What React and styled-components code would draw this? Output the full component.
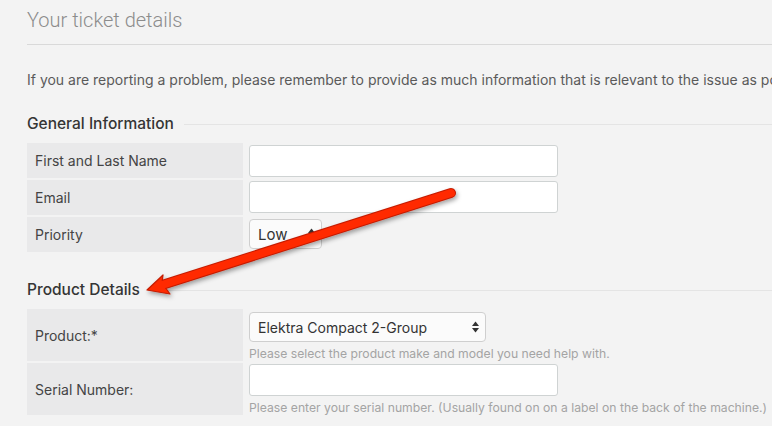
import React from "react";
import styled, { createGlobalStyle } from "styled-components";

const GlobalStyle = createGlobalStyle`
  html, body {
    margin: 0;
    padding: 0;
    background: #f3f3f3;
  }
  body {
    font-family: Inter, "Liberation Sans", Arial, sans-serif;
    color: #444;
    overflow: hidden;
  }
`;

const Page = styled.div`
  position: relative;
  width: 772px;
  height: 426px;
  padding-left: 27px;
  box-sizing: border-box;
  overflow: hidden;
`;

const Header = styled.div`
  height: 45px;
  border-bottom: 1px solid #d9d9d9;
  box-sizing: border-box;
`;

const Title = styled.h1`
  margin: 0;
  padding-top: 5px;
  font-family: Roboto, "Liberation Sans", sans-serif;
  font-weight: 300;
  font-size: 20px;
  line-height: 30px;
  color: #8c8c8c;
`;

const Intro = styled.p`
  margin: 25px 0 0;
  font-size: 14px;
  line-height: 20px;
  color: #5a5a5a;
  white-space: nowrap;
`;

const Legend = styled.h2`
  display: flex;
  align-items: center;
  margin: ${(p) => (p.$first ? "23px" : "27px")} 0 8px;
  font-size: 15.5px;
  font-weight: 500;
  line-height: 22px;
  color: #353535;

  &::after {
    content: "";
    flex: 1;
    height: 1px;
    margin-left: 10px;
    background: #e4e4e4;
  }
`;

const Rows = styled.div`
  display: flex;
  flex-direction: column;
  gap: 2px;
`;

const Row = styled.div`
  display: grid;
  grid-template-columns: 216px 1fr;
  column-gap: 6px;
  min-height: ${(p) => (p.$tall ? "52px" : "35px")};
`;

const Label = styled.div`
  display: flex;
  align-items: center;
  padding: 0 8px;
  background: #e9e9ea;
  font-size: 14px;
  color: #444;
`;

const Field = styled.div`
  padding-top: ${(p) => p.$top || 2}px;
`;

const Input = styled.input`
  display: block;
  width: 309px;
  height: 32px;
  box-sizing: border-box;
  border: 1px solid #cfd3d3;
  border-radius: 3px;
  background: #fff;
`;

const SelectWrap = styled.div`
  position: relative;
  width: ${(p) => p.$width}px;
`;

const Select = styled.select`
  appearance: none;
  display: block;
  width: 100%;
  height: 30px;
  box-sizing: border-box;
  padding: 0 22px 0 8px;
  border: 1px solid #cfcfcf;
  border-radius: 4px;
  background: #fbfbfb;
  font-family: Inter, "Liberation Sans", Arial, sans-serif;
  font-size: ${(p) => p.$size || 14}px;
  color: #333;
`;

const Updown = styled.svg`
  position: absolute;
  right: 6px;
  top: 9px;
  pointer-events: none;
`;

const Help = styled.div`
  margin-top: 5px;
  font-size: 12.2px;
  line-height: 14px;
  color: #a4a4a4;
  white-space: nowrap;
`;

const Overlay = styled.svg`
  position: absolute;
  left: 0;
  top: 0;
  pointer-events: none;
`;

const Arrows = () => (
  <Updown width="9" height="12" viewBox="0 0 9 12">
    <path d="M4.5 0.5 L8 5 H1 Z" fill="#333" />
    <path d="M4.5 11.5 L8 7 H1 Z" fill="#333" />
  </Updown>
);

const Dropdown = ({ width, value, size }) => (
  <SelectWrap $width={width}>
    <Select defaultValue={value} $size={size}>
      <option>{value}</option>
    </Select>
    <Arrows />
  </SelectWrap>
);

const RedArrow = () => (
  <Overlay width="772" height="426" viewBox="0 0 772 426">
    <defs>
      <filter id="shadow" x="-10%" y="-30%" width="120%" height="160%">
        <feDropShadow dx="1.5" dy="2.5" stdDeviation="2" floodColor="#000" floodOpacity="0.35" />
      </filter>
    </defs>
    <g filter="url(#shadow)">
      <line x1="451" y1="193" x2="162" y2="285" stroke="#c41c00" strokeWidth="10" strokeLinecap="round" />
      <path d="M147 290 L163 275 L162 283 L170 294 Z" fill="#ff2a00" stroke="#c41c00" strokeWidth="1.2" strokeLinejoin="round" />
      <line x1="451" y1="193" x2="162" y2="285" stroke="#ff2a00" strokeWidth="8" strokeLinecap="round" />
    </g>
  </Overlay>
);

export default function App() {
  return (
    <>
      <GlobalStyle />
      <Page>
        <Header>
          <Title>Your ticket details</Title>
        </Header>
        <Intro>
          If you are reporting a problem, please remember to provide as much information that is relevant to the issue as possible.
        </Intro>

        <Legend $first>General Information</Legend>
        <Rows>
          <Row>
            <Label>First and Last Name</Label>
            <Field>
              <Input type="text" />
            </Field>
          </Row>
          <Row>
            <Label>Email</Label>
            <Field $top={1}>
              <Input type="email" />
            </Field>
          </Row>
          <Row>
            <Label>Priority</Label>
            <Field>
              <Dropdown width={73} value="Low" size={15} />
            </Field>
          </Row>
        </Rows>

        <Legend>Product Details</Legend>
        <Rows>
          <Row $tall>
            <Label>Product:*</Label>
            <Field $top={3}>
              <Dropdown width={237} value="Elektra Compact 2-Group" />
              <Help>Please select the product make and model you need help with.</Help>
            </Field>
          </Row>
          <Row $tall>
            <Label>Serial Number:</Label>
            <Field $top={1}>
              <Input type="text" />
              <Help>Please enter your serial number. (Usually found on on a label on the back of the machine.)</Help>
            </Field>
          </Row>
        </Rows>
        <RedArrow />
      </Page>
    </>
  );
}
